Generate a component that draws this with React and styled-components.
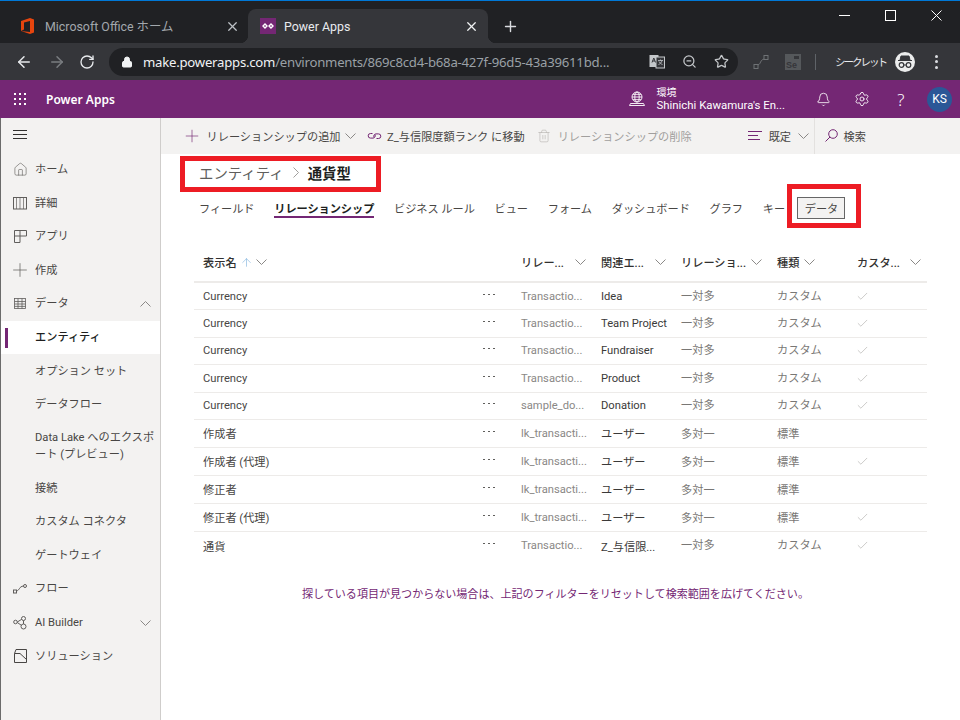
import React from "react";
import styled, { createGlobalStyle } from "styled-components";
import { ArrowLeft, ArrowRight, RotateCw, Lock, ZoomOut, Star, Plus, X, Bell, Settings, Check, Home, Trash2, ArrowUp } from "lucide-react";

const GlobalStyle = createGlobalStyle`
  html, body {
    margin: 0;
    height: 720px;
    overflow: hidden;
    background: #fff;
    font-family: Roboto, "Noto Sans CJK JP", sans-serif;
    font-size: 11.2px;
    color: #323130;
  }
`;

const Page = styled.div`
  position: relative;
  width: 960px;
  height: 720px;
  display: flex;
  flex-direction: column;
  overflow: hidden;
  border-top: 1px solid #0078d7;
  box-sizing: border-box;
`;

/* browser chrome */
const TabStrip = styled.div`
  height: 42px;
  flex: none;
  background: #202124;
  display: flex;
  align-items: flex-end;
`;

const Tab = styled.div`
  position: relative;
  width: ${(p) => p.$w}px;
  height: 34px;
  box-sizing: border-box;
  padding: 0 ${(p) => (p.$active ? 9 : 8)}px 0 ${(p) => p.$pl}px;
  display: flex;
  align-items: center;
  gap: ${(p) => p.$gap}px;
  border-radius: 8px 8px 0 0;
  background: ${(p) => (p.$active ? "#35363a" : "transparent")};
  color: ${(p) => (p.$active ? "#e8eaed" : "#a3a8ad")};
  font-size: 12.4px;
  ${(p) => p.$active && `
    &::before, &::after {
      content: "";
      position: absolute;
      bottom: 0;
      width: 8px;
      height: 8px;
    }
    &::before {
      left: -8px;
      background: radial-gradient(circle at 0 0, transparent 8px, #35363a 8.5px);
    }
    &::after {
      right: -8px;
      background: radial-gradient(circle at 100% 0, transparent 8px, #35363a 8.5px);
    }
  `}
`;

const TabTitle = styled.span`
  flex: 1;
  white-space: nowrap;
`;

const TabClose = styled.span`
  display: flex;
  color: ${(p) => (p.$active ? "#f1f3f4" : "#bdc1c6")};
`;

const NewTab = styled.div`
  width: 44px;
  display: flex;
  justify-content: center;
  color: #dadce0;
  padding-bottom: 8px;
`;

const WindowButtons = styled.div`
  margin-left: auto;
  align-self: flex-start;
  display: flex;
  padding-right: 1px;
`;

const WindowButton = styled.div`
  width: 46px;
  height: 29px;
  display: flex;
  align-items: center;
  justify-content: center;
`;

const Toolbar = styled.div`
  height: 37px;
  flex: none;
  background: #35363a;
  display: flex;
  align-items: center;
  padding-left: 7px;
  color: #dadce0;
`;

const NavButton = styled.div`
  width: ${(p) => p.$w ?? 33}px;
  display: flex;
  justify-content: center;
  color: ${(p) => (p.$off ? "#7a7d80" : "#e8eaed")};
`;

const Omnibox = styled.div`
  width: 629px;
  height: 28px;
  margin: 0 7px 0 8px;
  border-radius: 14px;
  background: #202124;
  display: flex;
  align-items: center;
  padding: 0 1px 0 12px;
  box-sizing: border-box;
  font-family: "Noto Sans", sans-serif;
  font-size: 13.2px;
`;

const Url = styled.div`
  flex: 1;
  margin-left: 10px;
  white-space: nowrap;
  color: #9aa0a6;
  letter-spacing: -0.25px;
`;

const Host = styled.span`
  color: #f1f3f4;
`;

const OmniIcon = styled.div`
  width: 32px;
  display: flex;
  justify-content: center;
  color: #c4c7ca;
`;

const ExtIcon = styled.div`
  width: 32px;
  display: flex;
  justify-content: center;
  color: #6f7275;
`;

const ToolbarDivider = styled.div`
  width: 1px;
  height: 16px;
  background: #5f6368;
  margin: 0 19px 0 6px;
`;

const Incognito = styled.span`
  font-size: 10.5px;
  letter-spacing: -2px;
  width: 51px;
  white-space: nowrap;
  color: #e8eaed;
  margin-right: 9px;
`;

const IncognitoBadge = styled.div`
  width: 20px;
  height: 20px;
  border-radius: 50%;
  background: #eceded;
  display: flex;
  align-items: center;
  justify-content: center;
`;

const MenuDots = styled.div`
  margin-left: 20px;
  display: flex;
  flex-direction: column;
  gap: 2.5px;
  & > i {
    width: 3px;
    height: 3px;
    border-radius: 50%;
    background: #dadce0;
  }
`;

/* app header */
const AppBar = styled.div`
  height: 38px;
  flex: none;
  background: #742774;
  color: #fff;
  display: flex;
  align-items: center;
`;

const Waffle = styled.div`
  width: 46px;
  display: flex;
  justify-content: center;
  padding-right: 6px;
  box-sizing: border-box;
`;

const AppName = styled.div`
  font-family: "Noto Sans", sans-serif;
  font-weight: 600;
  font-size: 12px;
  flex: 1;
`;

const Environment = styled.div`
  margin-left: 11px;
  width: 148px;
  line-height: 13px;
  font-size: 11.4px;
`;

const EnvLabel = styled.div`
  font-size: 10px;
`;

const HeaderIcon = styled.div`
  width: 38.5px;
  display: flex;
  justify-content: center;
`;

const HelpMark = styled(HeaderIcon)`
  font-family: "Noto Sans", sans-serif;
  font-weight: 300;
  font-size: 17px;
`;

const Avatar = styled.div`
  width: 25px;
  height: 25px;
  margin: 0 8px 0 7px;
  border-radius: 50%;
  background: #2b5797;
  display: flex;
  align-items: center;
  justify-content: center;
  font-size: 12px;
`;

/* body */
const Body = styled.div`
  flex: 1;
  display: flex;
  min-height: 0;
`;

const Sidebar = styled.nav`
  width: 161px;
  flex: none;
  box-sizing: border-box;
  background: #f3f2f1;
  border-left: 1px solid #6b6b6b;
  border-right: 1px solid #cfcdcb;
`;

const NavItem = styled.div`
  position: relative;
  height: ${(p) => (p.$tall ? 49.8 : p.$first ? 34.8 : 33.6)}px;
  display: flex;
  align-items: center;
  line-height: 17px;
  color: ${(p) => (p.$active ? "#201f1e" : "#484644")};
  background: ${(p) => (p.$active ? "#fff" : "transparent")};
  font-weight: ${(p) => (p.$active ? 500 : 400)};
  ${(p) => p.$active && `
    &::before {
      content: "";
      position: absolute;
      left: 4px;
      top: 7px;
      width: 3px;
      height: 20px;
      background: #742774;
    }
  `}
`;

const NavIcon = styled.div`
  width: 34px;
  flex: none;
  display: flex;
  justify-content: center;
  padding-left: 4px;
  box-sizing: border-box;
  color: #605e5c;
`;

const NavLabel = styled.div`
  flex: 1;
  padding-right: 4px;
`;

const NavChevron = styled.div`
  width: 20px;
  flex: none;
  display: flex;
`;

const Main = styled.main`
  flex: 1;
  min-width: 0;
  display: flex;
  flex-direction: column;
`;

const CommandBar = styled.div`
  height: 36px;
  flex: none;
  background: #f3f2f1;
  display: flex;
  align-items: center;
  padding: 0 0 1px 21px;
  box-sizing: border-box;
  white-space: nowrap;
`;

const Command = styled.div`
  display: flex;
  align-items: center;
  gap: ${(p) => p.$gap ?? 6}px;
  margin-left: ${(p) => p.$ml ?? 0}px;
  color: ${(p) => (p.$off ? "#a19f9d" : "#484644")};
`;

const CommandDivider = styled.div`
  width: 1px;
  height: 36px;
  margin-left: 4.5px;
  background: #e3e1df;
`;

const PurpleIcon = styled.span`
  display: flex;
  color: ${(p) => (p.$off ? "#b3b0ad" : "#742774")};
`;

const Crumbs = styled.div`
  height: 37px;
  flex: none;
  display: flex;
  align-items: center;
  padding-left: 38px;
  gap: 9px;
  font-size: 14.4px;
  color: #605e5c;
`;

const CrumbCurrent = styled.span`
  font-weight: 600;
  color: #201f1e;
`;

const Tabs = styled.div`
  height: 34px;
  flex: none;
  display: flex;
  align-items: center;
  padding-left: 38px;
  gap: 19.8px;
  letter-spacing: -0.05px;
  color: #484644;
`;

const TabLink = styled.div`
  position: relative;
  ${(p) => p.$active && `
    font-weight: 600;
    color: #201f1e;
    &::after {
      content: "";
      position: absolute;
      left: 0;
      right: 0;
      bottom: -2px;
      height: 2px;
      background: #742774;
    }
  `}
`;

const DataButton = styled.div`
  margin-left: -7.4px;
  width: 48px;
  height: 22px;
  box-sizing: border-box;
  border: 1px solid #666;
  background: #f3f2f1;
  display: flex;
  align-items: center;
  justify-content: center;
`;

const Table = styled.div`
  margin: 18px 33px 0 33px;
`;

const columns = "280px 47px 80px 80px 96px 80px 70px";

const HeaderRow = styled.div`
  display: grid;
  grid-template-columns: ${columns};
  height: 38px;
  align-items: center;
  border-bottom: 2px solid #edebe9;
  font-weight: 500;
  color: #323130;
`;

const HeaderCell = styled.div`
  display: flex;
  align-items: center;
  white-space: nowrap;
  padding-left: ${(p) => p.$pl ?? 0}px;
  padding-right: ${(p) => p.$pr ?? 15}px;
  justify-content: ${(p) => (p.$spread ? "space-between" : "flex-start")};
  gap: ${(p) => p.$gap ?? 5}px;
`;

const SortArrow = styled.span`
  display: flex;
  color: #6ba5d8;
`;

const Row = styled.div`
  display: grid;
  grid-template-columns: ${columns};
  height: ${(p) => p.$h}px;
  box-sizing: border-box;
  align-items: center;
  border-bottom: ${(p) => (p.$last ? "none" : "1px solid #edebe9")};
`;

const Cell = styled.div`
  white-space: nowrap;
  color: ${(p) => p.$color || "#605e5c"};
  padding-left: ${(p) => p.$pl ?? 0}px;
  padding-bottom: ${(p) => (p.$raise ? 3 : 0)}px;
`;

const CheckCell = styled.div`
  display: flex;
  color: #a19f9d;
  margin-left: -1px;
`;

const More = styled.div`
  display: flex;
  padding: 0 0 4px 9px;
  gap: 3px;
  & > i {
    width: 2px;
    height: 1px;
    background: #605e5c;
  }
`;

const Hint = styled.div`
  margin-top: 25px;
  padding-left: 141px;
  font-size: 11.05px;
  color: #742774;
`;

const RedBox = styled.div`
  position: absolute;
  box-sizing: border-box;
  border: 5px solid #ed1c24;
  left: ${(p) => p.$x}px;
  top: ${(p) => p.$y}px;
  width: ${(p) => p.$w}px;
  height: ${(p) => p.$h}px;
`;

const Chevron = ({ up, color = "#8a8886" }) => (
  <svg width="11" height="6" viewBox="0 0 11 6" fill="none" stroke={color}>
    <path d={up ? "M.5 5.500 5.500 .5l5 5" : "M.5 .5l5 5 5-5"} />
  </svg>
);

const CrumbChevron = () => (
  <svg width="6" height="11" viewBox="0 0 6 11" fill="none" stroke="#a19f9d">
    <path d="M.5 .5l5 5-5 5" />
  </svg>
);

const OfficeLogo = () => (
  <svg width="14" height="16" viewBox="0 0 14 16">
    <path d="M0 3 9 0l4 1.500v13L9 16l-9-3 9 1V3L3 4.500v7L0 13z" fill="#e6450e" />
  </svg>
);

const PowerAppsIcon = () => (
  <svg width="16" height="16" viewBox="0 0 16 16">
    <rect width="16" height="16" fill="#742774" />
    <path d="M3 8l2-2 2 2-2 2zM9 8l2-2 2 2-2 2z" fill="none" stroke="#fff" strokeWidth="1.400" />
  </svg>
);

const MinimizeIcon = () => (
  <svg width="11" height="11" viewBox="0 0 11 11" stroke="#fff"><path d="M0 5.500h11" /></svg>
);

const MaximizeIcon = () => (
  <svg width="11" height="11" viewBox="0 0 11 11" fill="none" stroke="#fff"><rect x=".5" y=".5" width="10" height="10" /></svg>
);

const CloseIcon = () => (
  <svg width="11" height="11" viewBox="0 0 11 11" stroke="#fff"><path d="M.5 .5l10 10M10.500 .5l-10 10" /></svg>
);

const GridIcon = () => (
  <svg width="13" height="13" viewBox="0 0 13 13" fill="#fff">
    {[1, 6, 11].flatMap((y) =>
      [1, 6, 11].map((x) => <rect key={x + "-" + y} x={x - 1} y={y - 1} width="2" height="2" />)
    )}
  </svg>
);

const TranslateIcon = () => (
  <svg width="16" height="15" viewBox="0 0 16 15">
    <rect x="0.5" y="1" width="9" height="12" fill="#c4c7ca" />
    <rect x="7" y="3" width="8.500" height="11" fill="#35363a" stroke="#c4c7ca" />
    <path d="M3 8.500 4.800 4l1.800 4.500M3.600 7h2.400" stroke="#35363a" fill="none" />
    <path d="M9 6.500h5M11.500 5.500v1M13 6.500c-.5 2-2 3.500-3.500 4M10 7.500c.8 1.500 2 2.500 3.500 3" stroke="#c4c7ca" fill="none" strokeWidth=".8" />
  </svg>
);

const ExtLinkIcon = () => (
  <svg width="16" height="16" viewBox="0 0 16 16" fill="none" stroke="currentColor">
    <rect x="1" y="10.500" width="4" height="4" />
    <rect x="11" y="1.500" width="4" height="4" />
    <path d="M5 11C8 10 7 6 11 5" />
  </svg>
);

const SeIcon = () => (
  <svg width="16" height="16" viewBox="0 0 16 16">
    <rect width="16" height="16" fill="#55585b" />
    <text x="1" y="14" fontSize="9" fontWeight="700" fill="#35363a" fontFamily="Liberation Sans, sans-serif">Se</text>
    <rect x="9" y="2" width="5" height="3" fill="#35363a" />
  </svg>
);

const IncognitoIcon = () => (
  <svg width="16" height="13" viewBox="0 0 16 13" fill="none" stroke="#35363a">
    <path d="M4 1h8l1 4H3zM1 5.500h14" fill="#35363a" />
    <circle cx="4.500" cy="10" r="2.300" strokeWidth="1.200" />
    <circle cx="11.500" cy="10" r="2.300" strokeWidth="1.200" />
    <path d="M6.800 10h2.400" />
  </svg>
);

const EnvIcon = () => (
  <svg width="18" height="16" viewBox="0 0 18 16" fill="none" stroke="#fff" strokeWidth=".9">
    <circle cx="9" cy="6" r="5" />
    <ellipse cx="9" cy="6" rx="2.200" ry="5" />
    <path d="M4 6h10M5 3.300h8M5 8.700h8M2.500 12.500h13l1 2H1.500z" />
  </svg>
);

const Hamburger = () => (
  <svg width="14" height="10" viewBox="0 0 14 10" stroke="#323130">
    <path d="M0 .5h14M0 4.500h14M0 8.500h14" />
  </svg>
);

const BookIcon = () => (
  <svg width="14" height="13" viewBox="0 0 14 13" fill="none" stroke="#605e5c">
    <rect x=".5" y=".5" width="13" height="11.500" />
    <path d="M7 .5V12M3.500 .5V12M10.500 .5V12" strokeWidth=".7" />
  </svg>
);

const AppsIcon = () => (
  <svg width="13" height="13" viewBox="0 0 13 13" fill="none" stroke="#605e5c">
    <path d="M.5 12.500V.5h12v5.500H.5M6 .5v12H.5" />
  </svg>
);

const TableIcon = () => (
  <svg width="12" height="11" viewBox="0 0 12 11" fill="#eee" stroke="#605e5c" strokeWidth=".8">
    <rect x=".5" y=".5" width="11" height="10" />
    <path d="M.5 3.500h11M.5 6h11M.5 8.400h11M4 .5v10M8 .5v10" />
  </svg>
);

const FlowIcon = () => (
  <svg width="14" height="10" viewBox="0 0 14 10" fill="none" stroke="#605e5c">
    <rect x=".5" y="6" width="3" height="3" />
    <circle cx="12" cy="2" r="1.500" />
    <path d="M3.500 7C7 6 6 2.500 10.500 2" />
  </svg>
);

const AiIcon = () => (
  <svg width="14" height="14" viewBox="0 0 14 14" fill="none" stroke="#605e5c">
    <circle cx="2.500" cy="6" r="1.800" />
    <circle cx="10.500" cy="2.500" r="2" />
    <circle cx="10.500" cy="10.500" r="2.500" />
    <path d="M4.300 6 8.700 3.300M4.300 6.500 8.400 9.300M10.500 4.500v3.500" />
  </svg>
);

const SolutionIcon = () => (
  <svg width="13" height="14" viewBox="0 0 13 14" fill="none" stroke="#484644">
    <path d="M2 .5h10.500v13H.5V4.500L2 .5M.5 4.500 6 4.500l6.500 6" />
  </svg>
);

const LinkIcon = () => (
  <svg width="15" height="10" viewBox="0 0 15 10" fill="none" stroke="#742774">
    <path d="M5.500 2.500h-2a2.300 2.300 0 0 0 0 4.600h2.500a2.300 2.300 0 0 0 2-3.300" />
    <path d="M9.500 7.500h2a2.300 2.300 0 0 0 0-4.600H9a2.300 2.300 0 0 0-2 3.300" />
  </svg>
);

const ListIcon = () => (
  <svg width="14" height="9" viewBox="0 0 14 9" stroke="#742774">
    <path d="M0 .5h14M0 4.500h10M0 8.500h12" />
  </svg>
);

const SearchGlass = () => (
  <svg width="13" height="13" viewBox="0 0 13 13" fill="none" stroke="#742774">
    <circle cx="8" cy="5" r="4.300" />
    <path d="M5 8 .5 12.500" />
  </svg>
);

const thin = { strokeWidth: 1 };

const navItems = [
  { label: "", icon: <Hamburger />, first: true },
  { label: "ホーム", icon: <Home size={15} {...thin} /> },
  { label: "詳細", icon: <BookIcon /> },
  { label: "アプリ", icon: <AppsIcon /> },
  { label: "作成", icon: <Plus size={22} strokeWidth={0.8} /> },
  { label: "データ", icon: <TableIcon />, chevron: "up" },
  { label: "エンティティ", active: true },
  { label: "オプション セット" },
  { label: "データフロー" },
  { label: "Data Lake へのエクスポート (プレビュー)", tall: true },
  { label: "接続" },
  { label: "カスタム コネクタ" },
  { label: "ゲートウェイ" },
  { label: "フロー", icon: <FlowIcon /> },
  { label: "AI Builder", icon: <AiIcon />, chevron: "down" },
  { label: "ソリューション", icon: <SolutionIcon /> },
];

const tabNames = ["フィールド", "リレーションシップ", "ビジネス ルール", "ビュー", "フォーム", "ダッシュボード", "グラフ", "キー"];

const rows = [
  ["Currency", "Transactio...", "Idea", "一対多", "カスタム", true],
  ["Currency", "Transactio...", "Team Project", "一対多", "カスタム", true],
  ["Currency", "Transactio...", "Fundraiser", "一対多", "カスタム", true],
  ["Currency", "Transactio...", "Product", "一対多", "カスタム", true],
  ["Currency", "sample_do...", "Donation", "一対多", "カスタム", true],
  ["作成者", "lk_transacti...", "ユーザー", "多対一", "標準", false],
  ["作成者 (代理)", "lk_transacti...", "ユーザー", "多対一", "標準", true],
  ["修正者", "lk_transacti...", "ユーザー", "多対一", "標準", false],
  ["修正者 (代理)", "lk_transacti...", "ユーザー", "多対一", "標準", true],
  ["通貨", "Transactio...", "Z_与信限...", "一対多", "カスタム", true],
];

function App() {
  return (
    <Page>
      <GlobalStyle />
      <TabStrip>
        <Tab $w={248} $pl={21} $gap={10}>
          <OfficeLogo />
          <TabTitle>Microsoft Office ホーム</TabTitle>
          <TabClose><X size={15} strokeWidth={2} /></TabClose>
        </Tab>
        <Tab $w={240} $pl={12} $gap={8} $active>
          <PowerAppsIcon />
          <TabTitle>Power Apps</TabTitle>
          <TabClose $active><X size={15} strokeWidth={2} /></TabClose>
        </Tab>
        <NewTab>
          <Plus size={17} strokeWidth={2} />
        </NewTab>
        <WindowButtons>
          <WindowButton><MinimizeIcon /></WindowButton>
          <WindowButton><MaximizeIcon /></WindowButton>
          <WindowButton><CloseIcon /></WindowButton>
        </WindowButtons>
      </TabStrip>

      <Toolbar>
        <NavButton><ArrowLeft size={18} /></NavButton>
        <NavButton $off><ArrowRight size={18} /></NavButton>
        <NavButton $w={28}><RotateCw size={16} /></NavButton>
        <Omnibox>
          <Lock size={12} fill="#f1f3f4" color="#f1f3f4" />
          <Url><Host>make.powerapps.com</Host>/environments/869c8cd4-b68a-427f-96d5-43a39611bd...</Url>
          <OmniIcon><TranslateIcon /></OmniIcon>
          <OmniIcon><ZoomOut size={15} /></OmniIcon>
          <OmniIcon><Star size={15} /></OmniIcon>
        </Omnibox>
        <ExtIcon><ExtLinkIcon /></ExtIcon>
        <ExtIcon><SeIcon /></ExtIcon>
        <ToolbarDivider />
        <Incognito>シークレット</Incognito>
        <IncognitoBadge><IncognitoIcon /></IncognitoBadge>
        <MenuDots><i /><i /><i /></MenuDots>
      </Toolbar>

      <AppBar>
        <Waffle><GridIcon /></Waffle>
        <AppName>Power Apps</AppName>
        <EnvIcon />
        <Environment>
          <EnvLabel>環境</EnvLabel>
          Shinichi Kawamura's En...
        </Environment>
        <HeaderIcon><Bell size={15} strokeWidth={1.3} /></HeaderIcon>
        <HeaderIcon><Settings size={16} strokeWidth={1.3} /></HeaderIcon>
        <HelpMark>?</HelpMark>
        <Avatar>KS</Avatar>
      </AppBar>

      <Body>
        <Sidebar>
          {navItems.map((item, i) => (
            <NavItem key={i} $active={item.active} $tall={item.tall} $first={item.first}>
              <NavIcon>{item.icon}</NavIcon>
              <NavLabel>{item.label}</NavLabel>
              {item.chevron && (
                <NavChevron><Chevron up={item.chevron === "up"} /></NavChevron>
              )}
            </NavItem>
          ))}
        </Sidebar>

        <Main>
          <CommandBar>
            <Command $gap={4.5}>
              <PurpleIcon><Plus size={20} strokeWidth={0.8} /></PurpleIcon>
              リレーションシップの追加
              <Chevron />
            </Command>
            <Command $ml={11} $gap={5}>
              <LinkIcon />
              Z_与信限度額ランク に移動
            </Command>
            <Command $ml={12} $gap={7} $off>
              <PurpleIcon $off><Trash2 size={14} {...thin} /></PurpleIcon>
              リレーションシップの削除
            </Command>
            <Command $ml={56} $gap={7}>
              <ListIcon />
              既定
              <Chevron />
            </Command>
            <CommandDivider />
            <Command $ml={10} $gap={6}>
              <SearchGlass />
              検索
            </Command>
          </CommandBar>

          <Crumbs>
            エンティティ
            <CrumbChevron />
            <CrumbCurrent>通貨型</CrumbCurrent>
          </Crumbs>

          <Tabs>
            {tabNames.map((name) => (
              <TabLink key={name} $active={name === "リレーションシップ"}>{name}</TabLink>
            ))}
            <DataButton>データ</DataButton>
          </Tabs>

          <Table>
            <HeaderRow>
              <HeaderCell $pl={9} $gap={3}>
                表示名
                <SortArrow><ArrowUp size={13} {...thin} /></SortArrow>
                <Chevron />
              </HeaderCell>
              <span />
              <HeaderCell $spread>リレー...<Chevron /></HeaderCell>
              <HeaderCell $spread>関連エ...<Chevron /></HeaderCell>
              <HeaderCell $spread>リレーショ...<Chevron /></HeaderCell>
              <HeaderCell>種類<Chevron /></HeaderCell>
              <HeaderCell $spread $pr={6}>カスタ...<Chevron /></HeaderCell>
            </HeaderRow>
            {rows.map((r, i) => (
              <Row key={i} $h={i < 5 ? 27.4 : 28} $last={i === rows.length - 1}>
                <Cell $pl={9} $color="#484644">{r[0]}</Cell>
                <More><i /><i /><i /></More>
                <Cell $color="#8a8886">{r[1]}</Cell>
                <Cell $color="#3b3a39">{r[2]}</Cell>
                <Cell $color="#797775" $raise={r[3] === "一対多"}>{r[3]}</Cell>
                <Cell $color="#797775" $raise={r[3] === "一対多"}>{r[4]}</Cell>
                <CheckCell>{r[5] && <Check size={13} {...thin} />}</CheckCell>
              </Row>
            ))}
          </Table>

          <Hint>探している項目が見つからない場合は、上記のフィルターをリセットして検索範囲を広げてください。</Hint>
        </Main>
      </Body>

      <RedBox $x={180} $y={155} $w={201} $h={36} />
      <RedBox $x={787} $y={183} $w={74} $h={44} />
    </Page>
  );
}

export default App;
